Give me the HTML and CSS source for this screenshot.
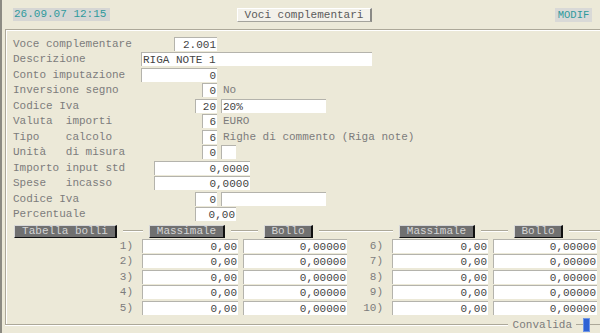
FILE: index.html
```html
<!DOCTYPE html>
<html>
<head>
<meta charset="utf-8">
<link rel="stylesheet" href="styles.css">
</head>
<body>
<div class="screen">
  <div class="topbar">
    <span class="date">26.09.07 12:15</span>
    <span class="titlebtn">Voci complementari</span>
    <span class="mode">MODIF</span>
  </div>
  <div class="frame">
    <div class="row"><span class="lbl">Voce complementare</span><span class="box r m33 w43">2.001</span></div>
    <div class="row"><span class="lbl">Descrizione</span><span class="box l w231">RIGA NOTE 1</span></div>
    <div class="row"><span class="lbl">Conto imputazione</span><span class="box r w76">0</span></div>
    <div class="row"><span class="lbl">Inversione segno</span><span class="box r m61 w15">0</span><span class="txt">No</span></div>
    <div class="row"><span class="lbl">Codice Iva</span><span class="box r m54 w22">20</span><span class="box l m4 w105">20%</span></div>
    <div class="row"><span class="lbl">Valuta  importi</span><span class="box r m61 w15">6</span><span class="txt">EURO</span></div>
    <div class="row"><span class="lbl">Tipo    calcolo</span><span class="box r m61 w15">6</span><span class="txt">Righe di commento (Riga note)</span></div>
    <div class="row"><span class="lbl">Unità   di misura</span><span class="box r m61 w15">0</span><span class="box l m4 w15"></span></div>
    <div class="row"><span class="lbl">Importo input std</span><span class="box r m13 w96">0,0000</span></div>
    <div class="row"><span class="lbl">Spese   incasso</span><span class="box r m13 w96">0,0000</span></div>
    <div class="row"><span class="lbl">Codice Iva</span><span class="box r m54 w22">0</span><span class="box l m4 w105"></span></div>
    <div class="row"><span class="lbl">Percentuale</span><span class="box r m54 w41">0,00</span></div>

    <div class="hdr">
      <span class="hw first"><span class="hbtn w103">Tabella bolli</span></span>
      <span class="hw g20"><span class="hbtn w76">Massimale</span></span>
      <span class="hw g27"><span class="hbtn w49">Bollo</span></span>
      <span class="hw g74"><span class="hbtn w76">Massimale</span></span>
      <span class="hw g27"><span class="hbtn w49">Bollo</span></span>
    </div>

    <div class="tbl">
      <span class="n1">1)</span><span class="box r">0,00</span><span class="box r">0,00000</span><span class="n2">6)</span><span class="box r">0,00</span><span class="box r">0,00000</span>
      <span class="n1">2)</span><span class="box r">0,00</span><span class="box r">0,00000</span><span class="n2">7)</span><span class="box r">0,00</span><span class="box r">0,00000</span>
      <span class="n1">3)</span><span class="box r">0,00</span><span class="box r">0,00000</span><span class="n2">8)</span><span class="box r">0,00</span><span class="box r">0,00000</span>
      <span class="n1">4)</span><span class="box r">0,00</span><span class="box r">0,00000</span><span class="n2">9)</span><span class="box r">0,00</span><span class="box r">0,00000</span>
      <span class="n1">5)</span><span class="box r">0,00</span><span class="box r">0,00000</span><span class="n2">10)</span><span class="box r">0,00</span><span class="box r">0,00000</span>
    </div>

    <div class="legend"><span class="ltxt">Convalida</span><span class="dash"></span><span class="blue"></span></div>
  </div>
</div>
</body>
</html>
```

FILE: styles.css
```css
html, body {
  margin: 0;
  padding: 0;
  background: #ece9d8;
}
body {
  font-family: "Liberation Mono", "Courier New", monospace;
  font-size: 11px;
  color: #7c7c7c;
}
.screen {
  width: 598px;
  height: 333px;
  border-left: 2px solid #8c8b83;
  position: relative;
  overflow: hidden;
}
.topbar {
  height: 29px;
  display: flex;
  align-items: center;
  padding-left: 11px;
  box-sizing: border-box;
}
.date {
  background: #d6d6d4;
  color: #2f9a9c;
  height: 13px;
  line-height: 13px;
  padding: 0 3px 0 1px;
  width: 93px;
}
.titlebtn {
  margin-left: 127px;
  width: 135px;
  height: 14px;
  line-height: 13px;
  box-sizing: border-box;
  background: #f3f1ea;
  border-top: 1px solid #ffffff;
  border-left: 1px solid #ffffff;
  border-right: 2px solid #8a8a86;
  border-bottom: 1px solid #a4a39c;
  color: #5a5a5a;
  text-align: center;
}
.mode {
  margin-left: auto;
  margin-right: 8px;
  background: #d9d9d7;
  color: #2f9a9c;
  height: 14px;
  line-height: 14px;
  width: 37px;
  text-align: center;
  font-size: 10.5px;
}
.frame {
  margin-left: 3px;
  border-top: 1px solid #aca899;
  border-left: 1px solid #aca899;
  border-bottom: 1px solid #aca899;
  box-shadow: inset 1px 1px 0 #ffffff, 0 1px 0 #ffffff;
  height: 296px;
  box-sizing: border-box;
  padding-top: 6px;
  padding-left: 7px;
  position: relative;
}
.row {
  height: 15.5px;
  display: flex;
  align-items: center;
  white-space: pre;
}
.lbl {
  width: 128px;
  flex: none;
}
.box {
  height: 14px;
  line-height: 14px;
  box-sizing: border-box;
  background: #ffffff;
  border-top: 1px solid #b4b3ac;
  border-left: 1px solid #b4b3ac;
  color: #444444;
  flex: none;
  white-space: pre;
  overflow: hidden;
}
.box.r { text-align: right; padding-right: 1px; }
.box.l { text-align: left; padding-left: 1px; }
.txt { margin-left: 6px; }
.m4 { margin-left: 4px; }
.m13 { margin-left: 13px; }
.m33 { margin-left: 33px; }
.m54 { margin-left: 54px; }
.m61 { margin-left: 61px; }
.w15 { width: 15px; }
.w22 { width: 22px; }
.w41 { width: 41px; }
.w43 { width: 43px; }
.w49 { width: 49px; }
.w76 { width: 76px; }
.w96 { width: 96px; }
.w103 { width: 103px; }
.w105 { width: 105px; }
.w231 { width: 231px; }

.hdr {
  height: 16px;
  display: flex;
  align-items: flex-end;
  position: relative;
  margin-left: -1px;
}
.hdr::before {
  content: "";
  position: absolute;
  left: 0;
  right: 0;
  top: 8px;
  border-top: 1px solid #aca899;
  border-bottom: 1px solid #ffffff;
}
.hw {
  position: relative;
  background: #ece9d8;
  padding: 0 6px;
  display: flex;
}
.hw.first { margin-left: 0; padding-left: 2px; }
.g20 { margin-left: 20px; }
.g27 { margin-left: 27px; }
.g74 { margin-left: 74px; }
.hbtn {
  height: 13px;
  line-height: 11px;
  box-sizing: border-box;
  background: #707070;
  color: #d4d4d4;
  border-top: 1px solid #d8d8d8;
  border-left: 1px solid #d8d8d8;
  border-right: 2px solid #111111;
  border-bottom: 1px solid #111111;
  text-align: center;
}

.tbl {
  display: grid;
  grid-template-columns: 120px 105px 109px 36px 105px 109px;
  grid-auto-rows: 15.5px;
  align-items: center;
}
.tbl .n1, .tbl .n2 {
  text-align: right;
}
.tbl .box:nth-child(6n+2) { margin-left: 9px; width: 96px; }
.tbl .box:nth-child(6n+3) { margin-left: 5px; width: 104px; }
.tbl .box:nth-child(6n+5) { margin-left: 9px; width: 96px; }
.tbl .box:nth-child(6n+6) { margin-left: 5px; width: 104px; }

.legend {
  position: absolute;
  right: 0;
  bottom: -8px;
  display: flex;
  align-items: center;
  background: #ece9d8;
  padding-left: 5px;
  height: 15px;
}
.ltxt { color: #7c7c7c; }
.dash {
  width: 7px;
  margin-left: 4px;
  border-top: 1px solid #aca899;
}
.blue {
  width: 7px;
  height: 14px;
  box-sizing: border-box;
  background: #2f62d4;
  border: 1px solid #6f96e6;
}
.legend::after {
  content: "";
  width: 10px;
  border-top: 1px solid #aca899;
}
```
